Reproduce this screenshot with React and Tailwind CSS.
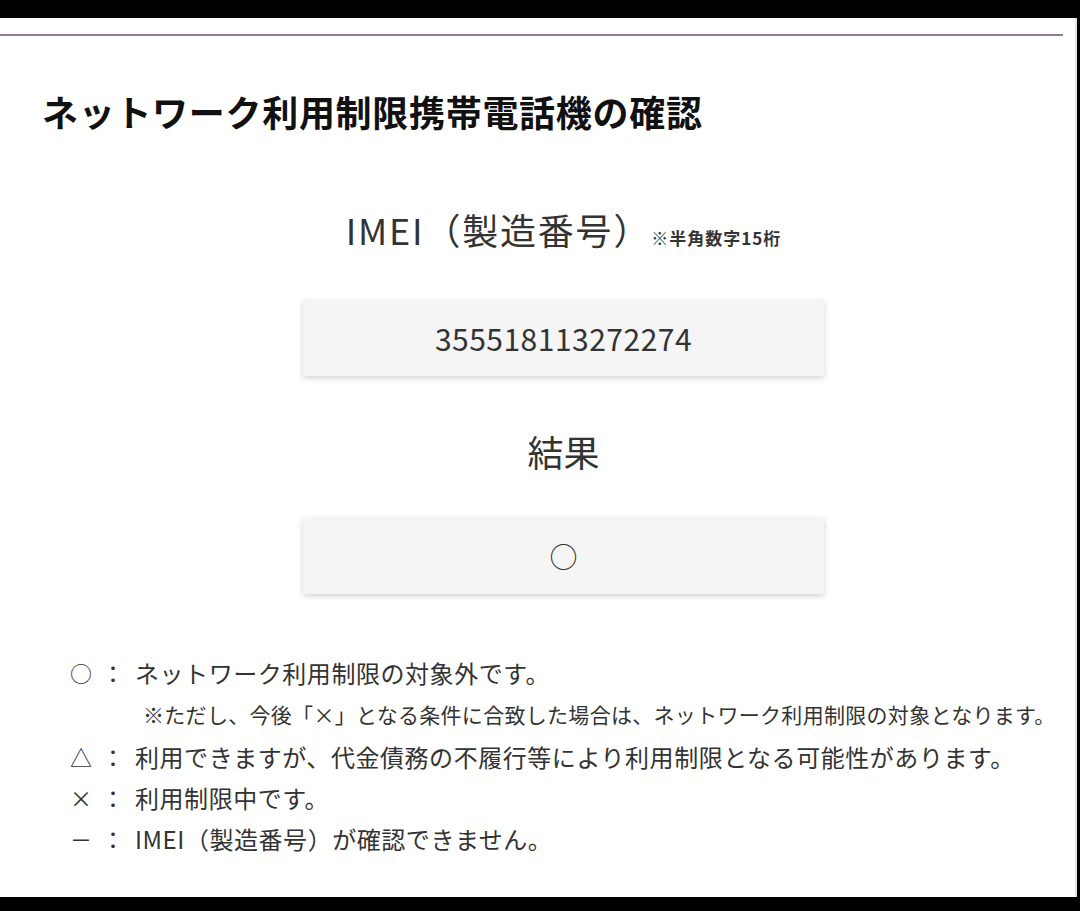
const font = { fontFamily: '"Noto Sans CJK JP", "Noto Sans", sans-serif' };

const legend = [
  { mark: "○", text: "ネットワーク利用制限の対象外です。" },
  { note: "※ただし、今後「×」となる条件に合致した場合は、ネットワーク利用制限の対象となります。" },
  { mark: "△", text: "利用できますが、代金債務の不履行等により利用制限となる可能性があります。" },
  { mark: "×", text: "利用制限中です。" },
  { mark: "－", text: "IMEI（製造番号）が確認できません。" },
];

export default function App() {
  return (
    <div className="flex h-[911px] w-[1080px] flex-col overflow-hidden bg-black" style={font}>
      <div className="mt-[18px] mb-[14px] mr-[3px] flex-1 border-r-2 border-[#e6e6e6] bg-white">
        <div className="mt-[16px] mr-[12px] h-[2px] bg-[#957991]" />

        <h1 className="mt-[51px] pl-[42px] text-[36px] font-bold leading-[48px] tracking-[0.7px] text-[#111]">
          ネットワーク利用制限携帯電話機の確認
        </h1>

        <div className="ml-[303px] w-[521px]">
          <div className="mt-[70px] flex items-baseline justify-center leading-[48px] text-[#333]">
            <span className="text-[36px] tracking-[1.8px]">IMEI（製造番号）</span>
            <span className="text-[17px] font-bold tracking-[1px]">※半角数字15桁</span>
          </div>

          <div className="mt-[38px] flex h-[76px] items-center justify-center bg-[#f5f5f5] text-[30px] tracking-[0.5px] text-[#333] shadow-[0_2px_6px_rgba(0,0,0,0.18)]">
            355518113272274
          </div>

          <div className="mt-[51px] text-center text-[36px] leading-[48px] text-[#333]">結果</div>

          <div className="mt-[43px] flex h-[76px] items-center justify-center bg-[#f5f5f5] text-[28px] text-[#333] shadow-[0_2px_6px_rgba(0,0,0,0.18)]">
            ○
          </div>
        </div>

        <ul className="mt-[58px] pl-[70px] text-[#333]">
          {legend.map((row, i) =>
            row.note ? (
              <li key={i} className="pl-[73px] text-[21px] leading-[43px] tracking-[0.3px]">
                {row.note}
              </li>
            ) : (
              <li key={i} className="flex text-[24px] leading-[41px]">
                <span className="w-[31px] text-[22px]">{row.mark}</span>
                <span className="w-[24px]">：</span>
                <span className="ml-[10px] tracking-[0.55px]">{row.text}</span>
              </li>
            )
          )}
        </ul>
      </div>
    </div>
  );
}
